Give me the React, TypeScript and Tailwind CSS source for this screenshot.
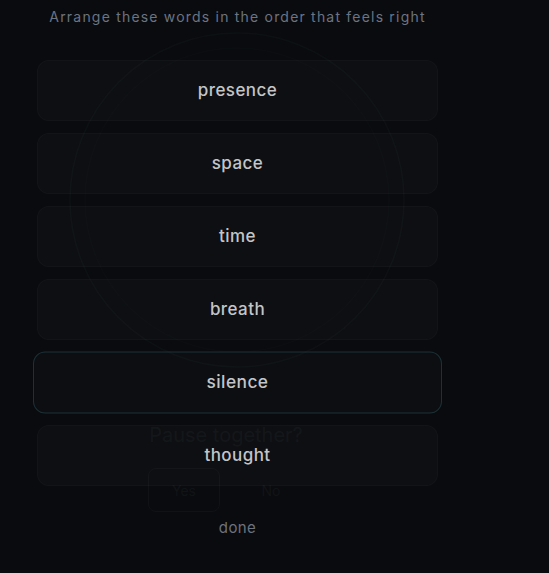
import React from 'react'

const words = ['presence', 'space', 'time', 'breath', 'silence', 'thought']

type WordCardProps = {
  word: string,
  active: boolean,
}

function WordCard(props: WordCardProps) {
  return (
    <div
      className={
        props.active
          ? 'flex h-[61px] scale-[1.02] items-center justify-center rounded-xl border border-[#1c3237] bg-white/[0.015]'
          : 'flex h-[61px] items-center justify-center rounded-xl border border-white/[0.025] bg-white/[0.02]'
      }
    >
      <span className="text-[17px] font-medium tracking-wide text-[#c3c5c8]">{props.word}</span>
    </div>
  )
}

// the faded screen underneath, still showing through
function Backdrop() {
  return (
    <div className="pointer-events-none absolute inset-0">
      <svg className="absolute left-0 top-0" width="549" height="573">
        <circle cx="237" cy="200" r="167" fill="none" stroke="#0e1114" strokeWidth="1.5" />
        <circle cx="237" cy="200" r="152" fill="none" stroke="#0c0f12" strokeWidth="1" />
      </svg>
      <div className="absolute left-[140px] top-[420px] w-[172px] whitespace-nowrap text-center text-[20px] text-[#101316]">
        Pause together?
      </div>
      <div className="absolute left-[148px] top-[468px] flex h-[44px] w-[72px] items-center justify-center rounded-lg border border-[#101215] text-[14px] text-[#111417]">
        Yes
      </div>
      <div className="absolute left-[235px] top-[468px] flex h-[44px] w-[72px] items-center justify-center text-[14px] text-[#111417]">
        No
      </div>
    </div>
  )
}

export default function App() {
  return (
    <div
      className="relative h-[573px] w-[549px] overflow-hidden bg-[#0a0b0e]"
      style={{ fontFamily: 'Inter, "Noto Sans", sans-serif' }}
    >
      <Backdrop />
      <div className="relative ml-[37px] flex w-[401px] flex-col">
        <p className="mt-[6px] text-center text-[14px] tracking-[1.2px] text-[#6b7483]">
          Arrange these words in the order that feels right
        </p>
        <div className="mt-[33px] flex flex-col gap-3">
          {words.map(w => <WordCard key={w} word={w} active={w === 'silence'} />)}
        </div>
        <button className="mt-[31px] self-center text-[15px] tracking-wide text-[#6b7280]">done</button>
      </div>
    </div>
  )
}
